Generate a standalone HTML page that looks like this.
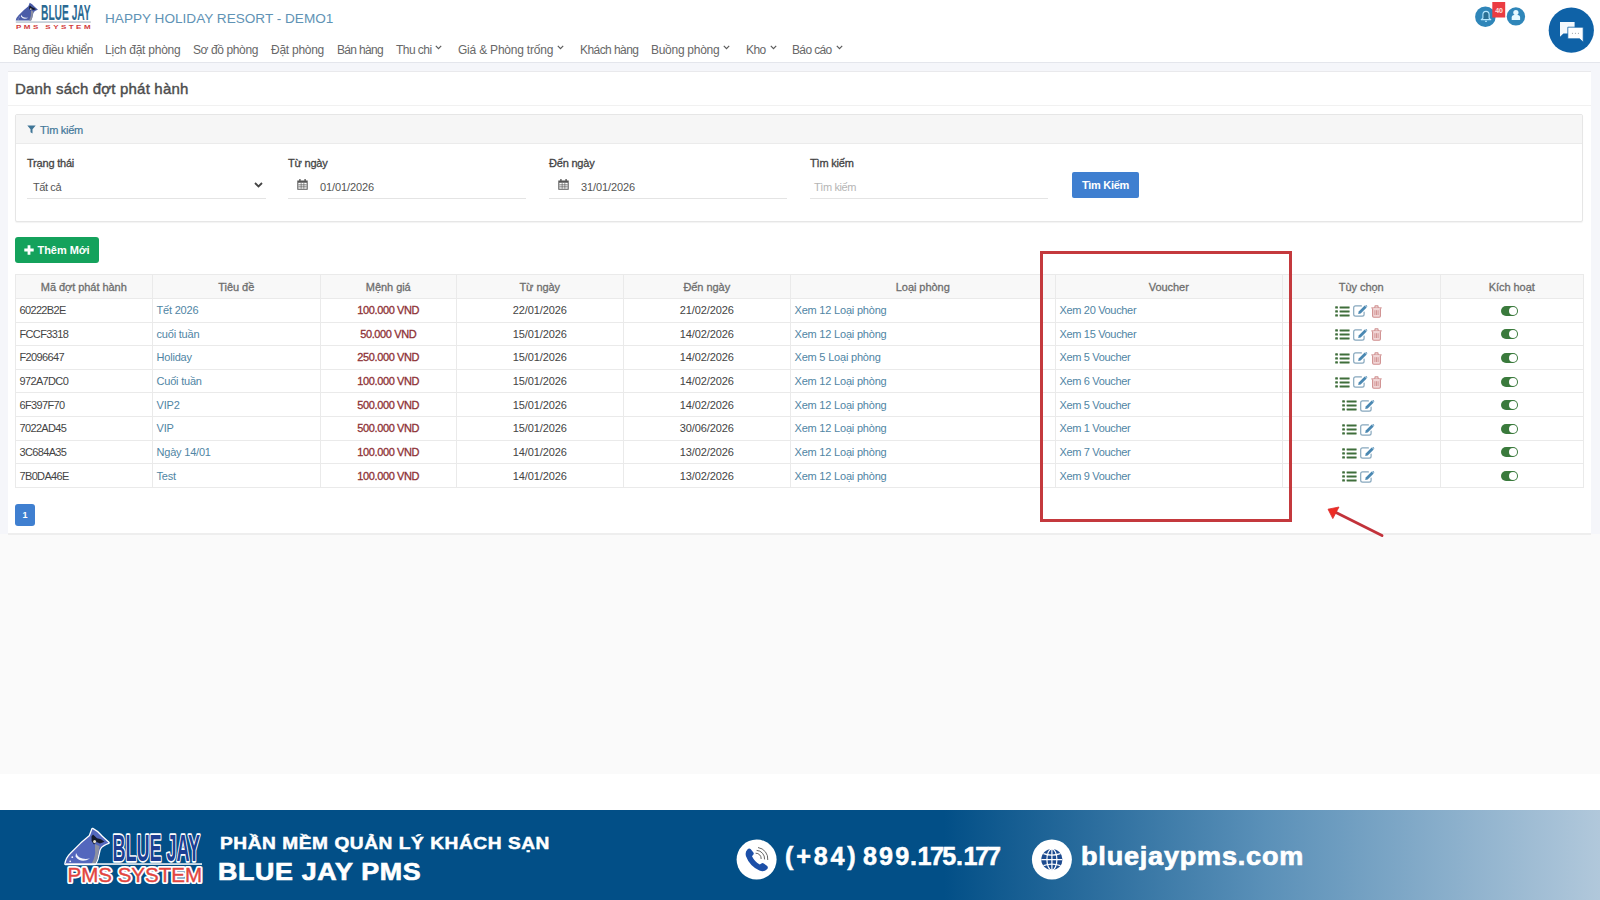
<!DOCTYPE html>
<html lang="vi">
<head>
<meta charset="utf-8">
<title>Danh sách đợt phát hành</title>
<style>
*{box-sizing:border-box;margin:0;padding:0}
html,body{width:1600px;height:900px;overflow:hidden;background:#fff}
body{font-family:"Liberation Sans",sans-serif;font-size:11px;color:#444;position:relative}
a{text-decoration:none;color:#5085a4}
.abs{position:absolute}
/* top bar */
#top{position:absolute;left:0;top:0;width:1600px;height:63px;background:#fff;border-bottom:1px solid #e4e6ec}
#resort{position:absolute;left:105px;top:10px;font-size:13.6px;line-height:18px;color:#5f93b5;white-space:nowrap}
#nav span{position:absolute;top:41.5px;font-size:12px;line-height:16px;color:#686868;white-space:nowrap;letter-spacing:-0.35px}
#nav svg{position:absolute;top:45px}
/* main area */
#main{position:absolute;left:0;top:63px;width:1600px;height:471px;background:#f5f6fa}
#below{position:absolute;left:0;top:534px;width:1600px;height:240px;background:#fafafa}
#card{position:absolute;left:8px;top:70.5px;width:1583px;height:464px;background:#fff;border-top:1px solid #e9e9ec;border-bottom:2px solid #eeeeee}
#title{position:absolute;left:15px;top:79px;font-size:15px;line-height:20px;font-weight:normal;-webkit-text-stroke:0.4px #4c4c4c;color:#4c4c4c;white-space:nowrap;letter-spacing:0.19px}
#titleline{position:absolute;left:8px;top:105px;width:1583px;height:1px;background:#f1f1f1}
/* search panel */
#panel{position:absolute;left:15px;top:114px;width:1568px;height:108px;border:1px solid #e6e6e6;border-radius:2px;background:#fff;box-shadow:0 1px 1px rgba(0,0,0,.05)}
#phead{position:absolute;left:0;top:0;width:1566px;height:29px;background:#f6f6f6;border-bottom:1px solid #ebebeb}
#phead span{position:absolute;left:24px;top:7.5px;font-size:11px;line-height:14px;color:#44789a;-webkit-text-stroke:0.2px #44789a;letter-spacing:-0.3px}
.lbl{position:absolute;top:155.5px;font-size:11px;line-height:14px;color:#444;font-weight:normal;-webkit-text-stroke:0.3px #444;white-space:nowrap;letter-spacing:-0.2px}
.val{position:absolute;top:180px;font-size:11px;line-height:14px;color:#555;white-space:nowrap;letter-spacing:-0.4px}
.uline{position:absolute;top:197.5px;height:1px;background:#e4e4e4}
#btnS{position:absolute;left:1072px;top:172px;width:67px;height:26px;background:#3f7fd0;border-radius:2px;color:#fff;font-size:11px;font-weight:bold;line-height:26px;text-align:center;letter-spacing:-0.3px}
#btnA{position:absolute;left:15px;top:237px;width:83.5px;height:26px;background:#14a25c;border-radius:3px;color:#fff;font-size:11px;font-weight:bold;line-height:26px;letter-spacing:-0.3px}
#btnA span{position:absolute;left:22.5px;top:0;letter-spacing:-0.05px}
/* table */
#tbl{position:absolute;left:15px;top:274.2px;width:1568px;border-collapse:collapse;table-layout:fixed;font-size:11px;letter-spacing:-0.4px}
#tbl th,#tbl td{border:1px solid #eaeaea;height:23.65px;padding:0 4px 0 3.5px;white-space:nowrap;overflow:hidden;line-height:14px;vertical-align:middle}
#tbl th{background:#f8f8f8;font-weight:normal;-webkit-text-stroke:0.3px #6e6e6e;color:#6e6e6e;text-align:center;height:23.7px;letter-spacing:-0.05px}
#tbl td.c{text-align:center}
#tbl td.m{text-align:center;color:#8e3236;font-weight:normal;-webkit-text-stroke:0.3px #8e3236;letter-spacing:-0.38px}
#tbl td{color:#444}
.ic{display:inline-block;vertical-align:middle;margin:0 1.5px;position:relative;left:-2.3px;top:0.2px}
.tg{display:inline-block;width:17px;height:10px;border-radius:5px;background:#3a7a3c;position:relative;vertical-align:middle;left:-2.3px;top:-0.7px}
.tg i{position:absolute;right:1px;top:1px;width:8px;height:8px;border-radius:50%;background:#fff}
#pg{position:absolute;left:15px;top:504px;width:20px;height:22px;background:#3f7fd0;border-radius:3px;color:#fff;font-size:9px;font-weight:bold;line-height:22px;text-align:center}
#redbox{position:absolute;left:1040px;top:251px;width:252px;height:271px;border:3px solid #c4393d}
/* footer */
#fwhite{position:absolute;left:0;top:774px;width:1600px;height:36px;background:#fff}
#foot{position:absolute;left:0;top:810px;width:1600px;height:90px;background:linear-gradient(90deg,#024f87 0,#024f87 59%,#5a90b8 79%,#b1c8db 100%)}
#foot .t1{position:absolute;left:219.8px;top:20.5px;font-size:17.4px;line-height:24px;font-weight:bold;color:#fff;white-space:nowrap;letter-spacing:0.5px;transform:scaleX(1.1);transform-origin:0 0;-webkit-text-stroke:0.5px #fff}
#foot .t2{position:absolute;left:218px;top:46px;font-size:24.4px;line-height:32px;font-weight:bold;color:#fff;white-space:nowrap;letter-spacing:0.6px;transform:scaleX(1.1);transform-origin:0 0;-webkit-text-stroke:0.7px #fff}
#foot .t3{position:absolute;left:785px;top:30px;width:230px;height:32px;font-size:25.2px;line-height:32px;font-weight:bold;color:#fff;white-space:nowrap;-webkit-text-stroke:0.5px #fff}
#foot .t3 span{position:absolute;top:0}
#foot .t4{position:absolute;left:1081px;top:30px;font-size:25.5px;line-height:32px;font-weight:bold;color:#fff;white-space:nowrap;letter-spacing:0.76px;transform:scaleX(1.06);transform-origin:0 0;-webkit-text-stroke:0.7px #fff}
#tbl a{letter-spacing:-0.2px}
#tbl td:nth-child(7) a{letter-spacing:-0.33px}
#tbl td.k{letter-spacing:-0.65px}
#tbl td.c{letter-spacing:-0.1px}
.num{letter-spacing:-0.1px}
</style>
</head>
<body>
<div id="top">

  <svg id="logo" class="abs" style="left:14px;top:1px" width="80" height="31" viewBox="0 0 80 31">
    <g transform="translate(1.6,19.8) scale(0.518,0.507) translate(-65.3,-864.7)"><path d="M65.5 864 Q66.5 858 70.7 854 L81.3 843.3 L89.9 836 L92.5 829 Q97.5 831.5 101.6 836.4 L108.5 842.8 Q105.5 844 103.7 845 Q100.5 846.5 99.5 849.7 L97.3 859.3 L95.2 864 Z" fill="#4a5ca8"/>
    <path d="M95 844 L99.6 846.3 L97.3 859.3 L95.2 864 L91.5 864 Q96 856 95 849 Z" fill="#8c90a0"/>
    <path d="M91.5 836.4 L93 834.5 L97 838.2 L101 839.3 L104.5 841.8 L100 843.4 L96.5 842 L94 844.6 L91.6 841 Z" fill="#141a2c"/>
    <ellipse cx="94.6" cy="841.6" rx="1.5" ry="1.7" fill="#e6e0cf"/>
    <path d="M76 853 Q79 860.5 90 858.5 Q81 863.8 75.5 856.4 Z" fill="#f2f5fc"/>
    <circle cx="72.3" cy="857.2" r="0.9" fill="#f2f5fc"/><circle cx="70.2" cy="861.3" r="0.9" fill="#f2f5fc"/></g>
    <text x="27" y="19.2" font-family="Liberation Sans, sans-serif" font-size="21.4" font-weight="bold" fill="#2b6a93" textLength="49.6" lengthAdjust="spacingAndGlyphs">BLUE JAY</text>
    <rect x="1.8" y="20.6" width="75" height="0.9" fill="#8fa3b3"/>
    <text x="1.25" y="28.1" transform="scale(1.6 1)" font-family="Liberation Sans, sans-serif" font-size="5" font-weight="bold" fill="#d23a3a" textLength="46.6" lengthAdjust="spacing">PMS SYSTEM</text>
  </svg>
  <svg class="abs" style="left:1470px;top:0" width="130" height="58" viewBox="1470 0 130 58">
    <circle cx="1485.4" cy="16.7" r="10.3" fill="#2f86b9"/>
    <path d="M1481.2 19.6 L1482.9 18.2 L1482.9 14.8 A3.1 3.4 0 0 1 1489.1 14.8 L1489.1 18.2 L1490.8 19.6 Z" fill="#2a6f94" stroke="#b4e6ff" stroke-width="1.1" stroke-linejoin="round"/>
    <path d="M1484.8 20.8 A1.2 1.2 0 0 0 1487.2 20.8 Z" fill="#b4e6ff"/>
    <rect x="1492.3" y="2" width="12.9" height="15.5" fill="#eb3c42"/>
    <text x="1498.9" y="13.2" font-family="Liberation Sans, sans-serif" font-size="7" font-weight="bold" fill="#ffe3e3" text-anchor="middle" letter-spacing="-0.2">40</text>
    <circle cx="1515.9" cy="16.4" r="9.2" fill="#2f86b9"/>
    <circle cx="1515.9" cy="12.5" r="2.6" fill="#e6faff"/>
    <path d="M1511.7 20.1 L1511.7 17.6 Q1511.7 15 1514.2 15 L1517.6 15 Q1520.1 15 1520.1 17.6 L1520.1 20.1 Z" fill="#e6faff"/>
    <circle cx="1571.3" cy="30.2" r="22.6" fill="#0f62a7"/>
    <path d="M1560 22 H1574.6 V33.4 H1563.4 L1560 36.8 Z" fill="#f4f8fc"/>
    <path d="M1567.8 27.2 H1583.2 V42.2 L1579.6 38.8 H1567.8 Z" fill="#fff" stroke="#0f62a7" stroke-width="0.8"/>
    <circle cx="1572.4" cy="33.2" r="0.55" fill="#8a8f96"/><circle cx="1575.4" cy="33.2" r="0.55" fill="#8a8f96"/><circle cx="1578.4" cy="33.2" r="0.55" fill="#8a8f96"/>
  </svg>
  <div id="resort">HAPPY HOLIDAY RESORT - DEMO1</div>
  <div id="nav">
    <span style="left:13px;letter-spacing:-0.4px">Bảng điều khiển</span>
    <span style="left:105px;letter-spacing:-0.23px">Lịch đặt phòng</span>
    <span style="left:193px;letter-spacing:-0.39px">Sơ đồ phòng</span>
    <span style="left:271px;letter-spacing:-0.26px">Đặt phòng</span>
    <span style="left:337px;letter-spacing:-0.68px">Bán hàng</span>
    <span style="left:396px;letter-spacing:-0.55px">Thu chi</span>
    <span style="left:458px;letter-spacing:-0.21px">Giá &amp; Phòng trống</span>
    <span style="left:580px;letter-spacing:-0.57px">Khách hàng</span>
    <span style="left:651px;letter-spacing:-0.28px">Buồng phòng</span>
    <span style="left:746px;letter-spacing:-0.58px">Kho</span>
    <span style="left:792px;letter-spacing:-0.64px">Báo cáo</span>
    <svg style="left:435px" width="7" height="5" viewBox="0 0 7 5"><path d="M0.8 0.9 L3.5 3.6 L6.2 0.9" fill="none" stroke="#5a5a5a" stroke-width="1.2"/></svg><svg style="left:557px" width="7" height="5" viewBox="0 0 7 5"><path d="M0.8 0.9 L3.5 3.6 L6.2 0.9" fill="none" stroke="#5a5a5a" stroke-width="1.2"/></svg><svg style="left:723px" width="7" height="5" viewBox="0 0 7 5"><path d="M0.8 0.9 L3.5 3.6 L6.2 0.9" fill="none" stroke="#5a5a5a" stroke-width="1.2"/></svg><svg style="left:770px" width="7" height="5" viewBox="0 0 7 5"><path d="M0.8 0.9 L3.5 3.6 L6.2 0.9" fill="none" stroke="#5a5a5a" stroke-width="1.2"/></svg><svg style="left:836px" width="7" height="5" viewBox="0 0 7 5"><path d="M0.8 0.9 L3.5 3.6 L6.2 0.9" fill="none" stroke="#5a5a5a" stroke-width="1.2"/></svg>
  </div>
</div>
<div id="main"></div>
<div id="below"></div>
<div id="card"></div>
<div id="title">Danh sách đợt phát hành</div>
<div id="titleline"></div>
<div id="panel"><div id="phead"><span>Tìm kiếm</span></div></div>
<div class="lbl" style="left:27px">Trạng thái</div>
<div class="lbl" style="left:288px">Từ ngày</div>
<div class="lbl" style="left:549px">Đến ngày</div>
<div class="lbl" style="left:810px">Tìm kiếm</div>
<div class="val" style="left:33px">Tất cả</div>
<div class="val num" style="left:320px">01/01/2026</div>
<div class="val num" style="left:581px">31/01/2026</div>
<div class="val" style="left:814px;color:#b5b5b5">Tìm kiếm</div>
<div class="uline" style="left:27px;width:239px"></div>
<div class="uline" style="left:288px;width:238px"></div>
<div class="uline" style="left:549px;width:238px"></div>
<div class="uline" style="left:810px;width:238px"></div>

<svg class="abs" style="left:27px;top:125px" width="9" height="9" viewBox="0 0 9 9"><path d="M0.3 0.4 H8.7 L5.5 4.2 V8.6 L3.5 7.2 V4.2 Z" fill="#3f7596"/></svg>
<svg class="abs" style="left:254px;top:182px" width="9" height="6" viewBox="0 0 9 6"><path d="M1 1 L4.5 4.4 L8 1" fill="none" stroke="#444" stroke-width="1.8"/></svg>
<svg class="abs cal" style="left:297px;top:179px" width="11" height="11" viewBox="0 0 11 11"><g fill="#555"><rect x="2.2" y="0" width="1.4" height="2.6" rx=".5"/><rect x="7.4" y="0" width="1.4" height="2.6" rx=".5"/><path d="M0.3 1.4 H10.7 V10.7 H0.3 Z M1.3 3.8 V9.7 H9.7 V3.8 Z" fill-rule="evenodd"/><path d="M1.3 5.6 H9.7 V6.2 H1.3 Z M1.3 7.6 H9.7 V8.2 H1.3 Z M3.8 3.8 H4.4 V9.7 H3.8 Z M6.6 3.8 H7.2 V9.7 H6.6 Z"/></g></svg>
<svg class="abs cal" style="left:558px;top:179px" width="11" height="11" viewBox="0 0 11 11"><g fill="#555"><rect x="2.2" y="0" width="1.4" height="2.6" rx=".5"/><rect x="7.4" y="0" width="1.4" height="2.6" rx=".5"/><path d="M0.3 1.4 H10.7 V10.7 H0.3 Z M1.3 3.8 V9.7 H9.7 V3.8 Z" fill-rule="evenodd"/><path d="M1.3 5.6 H9.7 V6.2 H1.3 Z M1.3 7.6 H9.7 V8.2 H1.3 Z M3.8 3.8 H4.4 V9.7 H3.8 Z M6.6 3.8 H7.2 V9.7 H6.6 Z"/></g></svg>
<div id="btnS">Tìm Kiếm</div>
<div id="btnA"><svg class="abs" style="left:9px;top:8px" width="10" height="10" viewBox="0 0 10 10"><path d="M3.6 0.3 H6.4 V3.6 H9.7 V6.4 H6.4 V9.7 H3.6 V6.4 H0.3 V3.6 H3.6 Z" fill="#fff"/></svg><span>Thêm Mới</span></div>
<table id="tbl">
<colgroup><col style="width:137px"><col style="width:168px"><col style="width:136px"><col style="width:167px"><col style="width:167px"><col style="width:265px"><col style="width:227px"><col style="width:158px"><col style="width:143px"></colgroup>
<thead><tr><th>Mã đợt phát hành</th><th>Tiêu đề</th><th>Mệnh giá</th><th>Từ ngày</th><th>Đến ngày</th><th>Loại phòng</th><th>Voucher</th><th>Tùy chọn</th><th>Kích hoạt</th></tr></thead>
<tbody>
<tr><td class="k">60222B2E</td><td><a>Tết 2026</a></td><td class="m">100.000 VND</td><td class="c">22/01/2026</td><td class="c">21/02/2026</td><td><a>Xem 12 Loại phòng</a></td><td><a>Xem 20 Voucher</a></td><td class="c o3"><svg class="ic" width="15" height="11" viewBox="0 0 15 11"><g fill="#3f6e3b"><rect x="0.2" y="0.3" width="2.7" height="2.3" rx=".4"/><rect x="4.6" y="0.5" width="10" height="1.9" rx=".3"/><rect x="0.2" y="4.3" width="2.7" height="2.3" rx=".4"/><rect x="4.6" y="4.5" width="10" height="1.9" rx=".3"/><rect x="0.2" y="8.3" width="2.7" height="2.3" rx=".4"/><rect x="4.6" y="8.5" width="10" height="1.9" rx=".3"/></g></svg><svg class="ic" width="15" height="12" viewBox="0 0 15 12"><path d="M8.4 0.9 H2.6 Q0.7 0.9 0.7 2.8 V9.3 Q0.7 11.2 2.6 11.2 H9.2 Q11.1 11.2 11.1 9.3 V7.2" fill="none" stroke="#86a7bd" stroke-width="1.2" stroke-linecap="round"/><path d="M5.2 8.9 L5.7 6.5 L11.7 0.5 L13.7 2.5 L7.7 8.5 Z" fill="#4a88b2"/><path d="M12.3 0.3 L13 -0.2 L14.4 1.2 L13.9 1.9 Z" fill="#4a88b2"/></svg><svg class="ic" width="11" height="13" viewBox="0 0 11 13"><g fill="none" stroke="#cf8f8f" stroke-width="1.1"><path d="M0.3 2.9 H10.7"/><path d="M3.6 2.8 L4.2 0.9 H6.8 L7.4 2.8"/><path d="M1.6 3.2 V11 Q1.6 12.2 2.8 12.2 H8.2 Q9.4 12.2 9.4 11 V3.2" fill="#f1d6d6"/><path d="M3.9 5.2 V10 M5.5 5.2 V10 M7.1 5.2 V10" stroke-width="0.9"/></g></svg></td><td class="c"><span class="tg"><i></i></span></td></tr>
<tr><td class="k">FCCF3318</td><td><a>cuối tuần</a></td><td class="m">50.000 VND</td><td class="c">15/01/2026</td><td class="c">14/02/2026</td><td><a>Xem 12 Loại phòng</a></td><td><a>Xem 15 Voucher</a></td><td class="c o3"><svg class="ic" width="15" height="11" viewBox="0 0 15 11"><g fill="#3f6e3b"><rect x="0.2" y="0.3" width="2.7" height="2.3" rx=".4"/><rect x="4.6" y="0.5" width="10" height="1.9" rx=".3"/><rect x="0.2" y="4.3" width="2.7" height="2.3" rx=".4"/><rect x="4.6" y="4.5" width="10" height="1.9" rx=".3"/><rect x="0.2" y="8.3" width="2.7" height="2.3" rx=".4"/><rect x="4.6" y="8.5" width="10" height="1.9" rx=".3"/></g></svg><svg class="ic" width="15" height="12" viewBox="0 0 15 12"><path d="M8.4 0.9 H2.6 Q0.7 0.9 0.7 2.8 V9.3 Q0.7 11.2 2.6 11.2 H9.2 Q11.1 11.2 11.1 9.3 V7.2" fill="none" stroke="#86a7bd" stroke-width="1.2" stroke-linecap="round"/><path d="M5.2 8.9 L5.7 6.5 L11.7 0.5 L13.7 2.5 L7.7 8.5 Z" fill="#4a88b2"/><path d="M12.3 0.3 L13 -0.2 L14.4 1.2 L13.9 1.9 Z" fill="#4a88b2"/></svg><svg class="ic" width="11" height="13" viewBox="0 0 11 13"><g fill="none" stroke="#cf8f8f" stroke-width="1.1"><path d="M0.3 2.9 H10.7"/><path d="M3.6 2.8 L4.2 0.9 H6.8 L7.4 2.8"/><path d="M1.6 3.2 V11 Q1.6 12.2 2.8 12.2 H8.2 Q9.4 12.2 9.4 11 V3.2" fill="#f1d6d6"/><path d="M3.9 5.2 V10 M5.5 5.2 V10 M7.1 5.2 V10" stroke-width="0.9"/></g></svg></td><td class="c"><span class="tg"><i></i></span></td></tr>
<tr><td class="k">F2096647</td><td><a>Holiday</a></td><td class="m">250.000 VND</td><td class="c">15/01/2026</td><td class="c">14/02/2026</td><td><a>Xem 5 Loại phòng</a></td><td><a>Xem 5 Voucher</a></td><td class="c o3"><svg class="ic" width="15" height="11" viewBox="0 0 15 11"><g fill="#3f6e3b"><rect x="0.2" y="0.3" width="2.7" height="2.3" rx=".4"/><rect x="4.6" y="0.5" width="10" height="1.9" rx=".3"/><rect x="0.2" y="4.3" width="2.7" height="2.3" rx=".4"/><rect x="4.6" y="4.5" width="10" height="1.9" rx=".3"/><rect x="0.2" y="8.3" width="2.7" height="2.3" rx=".4"/><rect x="4.6" y="8.5" width="10" height="1.9" rx=".3"/></g></svg><svg class="ic" width="15" height="12" viewBox="0 0 15 12"><path d="M8.4 0.9 H2.6 Q0.7 0.9 0.7 2.8 V9.3 Q0.7 11.2 2.6 11.2 H9.2 Q11.1 11.2 11.1 9.3 V7.2" fill="none" stroke="#86a7bd" stroke-width="1.2" stroke-linecap="round"/><path d="M5.2 8.9 L5.7 6.5 L11.7 0.5 L13.7 2.5 L7.7 8.5 Z" fill="#4a88b2"/><path d="M12.3 0.3 L13 -0.2 L14.4 1.2 L13.9 1.9 Z" fill="#4a88b2"/></svg><svg class="ic" width="11" height="13" viewBox="0 0 11 13"><g fill="none" stroke="#cf8f8f" stroke-width="1.1"><path d="M0.3 2.9 H10.7"/><path d="M3.6 2.8 L4.2 0.9 H6.8 L7.4 2.8"/><path d="M1.6 3.2 V11 Q1.6 12.2 2.8 12.2 H8.2 Q9.4 12.2 9.4 11 V3.2" fill="#f1d6d6"/><path d="M3.9 5.2 V10 M5.5 5.2 V10 M7.1 5.2 V10" stroke-width="0.9"/></g></svg></td><td class="c"><span class="tg"><i></i></span></td></tr>
<tr><td class="k">972A7DC0</td><td><a>Cuối tuần</a></td><td class="m">100.000 VND</td><td class="c">15/01/2026</td><td class="c">14/02/2026</td><td><a>Xem 12 Loại phòng</a></td><td><a>Xem 6 Voucher</a></td><td class="c o3"><svg class="ic" width="15" height="11" viewBox="0 0 15 11"><g fill="#3f6e3b"><rect x="0.2" y="0.3" width="2.7" height="2.3" rx=".4"/><rect x="4.6" y="0.5" width="10" height="1.9" rx=".3"/><rect x="0.2" y="4.3" width="2.7" height="2.3" rx=".4"/><rect x="4.6" y="4.5" width="10" height="1.9" rx=".3"/><rect x="0.2" y="8.3" width="2.7" height="2.3" rx=".4"/><rect x="4.6" y="8.5" width="10" height="1.9" rx=".3"/></g></svg><svg class="ic" width="15" height="12" viewBox="0 0 15 12"><path d="M8.4 0.9 H2.6 Q0.7 0.9 0.7 2.8 V9.3 Q0.7 11.2 2.6 11.2 H9.2 Q11.1 11.2 11.1 9.3 V7.2" fill="none" stroke="#86a7bd" stroke-width="1.2" stroke-linecap="round"/><path d="M5.2 8.9 L5.7 6.5 L11.7 0.5 L13.7 2.5 L7.7 8.5 Z" fill="#4a88b2"/><path d="M12.3 0.3 L13 -0.2 L14.4 1.2 L13.9 1.9 Z" fill="#4a88b2"/></svg><svg class="ic" width="11" height="13" viewBox="0 0 11 13"><g fill="none" stroke="#cf8f8f" stroke-width="1.1"><path d="M0.3 2.9 H10.7"/><path d="M3.6 2.8 L4.2 0.9 H6.8 L7.4 2.8"/><path d="M1.6 3.2 V11 Q1.6 12.2 2.8 12.2 H8.2 Q9.4 12.2 9.4 11 V3.2" fill="#f1d6d6"/><path d="M3.9 5.2 V10 M5.5 5.2 V10 M7.1 5.2 V10" stroke-width="0.9"/></g></svg></td><td class="c"><span class="tg"><i></i></span></td></tr>
<tr><td class="k">6F397F70</td><td><a>VIP2</a></td><td class="m">500.000 VND</td><td class="c">15/01/2026</td><td class="c">14/02/2026</td><td><a>Xem 12 Loại phòng</a></td><td><a>Xem 5 Voucher</a></td><td class="c o2"><svg class="ic" width="15" height="11" viewBox="0 0 15 11"><g fill="#3f6e3b"><rect x="0.2" y="0.3" width="2.7" height="2.3" rx=".4"/><rect x="4.6" y="0.5" width="10" height="1.9" rx=".3"/><rect x="0.2" y="4.3" width="2.7" height="2.3" rx=".4"/><rect x="4.6" y="4.5" width="10" height="1.9" rx=".3"/><rect x="0.2" y="8.3" width="2.7" height="2.3" rx=".4"/><rect x="4.6" y="8.5" width="10" height="1.9" rx=".3"/></g></svg><svg class="ic" width="15" height="12" viewBox="0 0 15 12"><path d="M8.4 0.9 H2.6 Q0.7 0.9 0.7 2.8 V9.3 Q0.7 11.2 2.6 11.2 H9.2 Q11.1 11.2 11.1 9.3 V7.2" fill="none" stroke="#86a7bd" stroke-width="1.2" stroke-linecap="round"/><path d="M5.2 8.9 L5.7 6.5 L11.7 0.5 L13.7 2.5 L7.7 8.5 Z" fill="#4a88b2"/><path d="M12.3 0.3 L13 -0.2 L14.4 1.2 L13.9 1.9 Z" fill="#4a88b2"/></svg></td><td class="c"><span class="tg"><i></i></span></td></tr>
<tr><td class="k">7022AD45</td><td><a>VIP</a></td><td class="m">500.000 VND</td><td class="c">15/01/2026</td><td class="c">30/06/2026</td><td><a>Xem 12 Loại phòng</a></td><td><a>Xem 1 Voucher</a></td><td class="c o2"><svg class="ic" width="15" height="11" viewBox="0 0 15 11"><g fill="#3f6e3b"><rect x="0.2" y="0.3" width="2.7" height="2.3" rx=".4"/><rect x="4.6" y="0.5" width="10" height="1.9" rx=".3"/><rect x="0.2" y="4.3" width="2.7" height="2.3" rx=".4"/><rect x="4.6" y="4.5" width="10" height="1.9" rx=".3"/><rect x="0.2" y="8.3" width="2.7" height="2.3" rx=".4"/><rect x="4.6" y="8.5" width="10" height="1.9" rx=".3"/></g></svg><svg class="ic" width="15" height="12" viewBox="0 0 15 12"><path d="M8.4 0.9 H2.6 Q0.7 0.9 0.7 2.8 V9.3 Q0.7 11.2 2.6 11.2 H9.2 Q11.1 11.2 11.1 9.3 V7.2" fill="none" stroke="#86a7bd" stroke-width="1.2" stroke-linecap="round"/><path d="M5.2 8.9 L5.7 6.5 L11.7 0.5 L13.7 2.5 L7.7 8.5 Z" fill="#4a88b2"/><path d="M12.3 0.3 L13 -0.2 L14.4 1.2 L13.9 1.9 Z" fill="#4a88b2"/></svg></td><td class="c"><span class="tg"><i></i></span></td></tr>
<tr><td class="k">3C684A35</td><td><a>Ngày 14/01</a></td><td class="m">100.000 VND</td><td class="c">14/01/2026</td><td class="c">13/02/2026</td><td><a>Xem 12 Loại phòng</a></td><td><a>Xem 7 Voucher</a></td><td class="c o2"><svg class="ic" width="15" height="11" viewBox="0 0 15 11"><g fill="#3f6e3b"><rect x="0.2" y="0.3" width="2.7" height="2.3" rx=".4"/><rect x="4.6" y="0.5" width="10" height="1.9" rx=".3"/><rect x="0.2" y="4.3" width="2.7" height="2.3" rx=".4"/><rect x="4.6" y="4.5" width="10" height="1.9" rx=".3"/><rect x="0.2" y="8.3" width="2.7" height="2.3" rx=".4"/><rect x="4.6" y="8.5" width="10" height="1.9" rx=".3"/></g></svg><svg class="ic" width="15" height="12" viewBox="0 0 15 12"><path d="M8.4 0.9 H2.6 Q0.7 0.9 0.7 2.8 V9.3 Q0.7 11.2 2.6 11.2 H9.2 Q11.1 11.2 11.1 9.3 V7.2" fill="none" stroke="#86a7bd" stroke-width="1.2" stroke-linecap="round"/><path d="M5.2 8.9 L5.7 6.5 L11.7 0.5 L13.7 2.5 L7.7 8.5 Z" fill="#4a88b2"/><path d="M12.3 0.3 L13 -0.2 L14.4 1.2 L13.9 1.9 Z" fill="#4a88b2"/></svg></td><td class="c"><span class="tg"><i></i></span></td></tr>
<tr><td class="k">7B0DA46E</td><td><a>Test</a></td><td class="m">100.000 VND</td><td class="c">14/01/2026</td><td class="c">13/02/2026</td><td><a>Xem 12 Loại phòng</a></td><td><a>Xem 9 Voucher</a></td><td class="c o2"><svg class="ic" width="15" height="11" viewBox="0 0 15 11"><g fill="#3f6e3b"><rect x="0.2" y="0.3" width="2.7" height="2.3" rx=".4"/><rect x="4.6" y="0.5" width="10" height="1.9" rx=".3"/><rect x="0.2" y="4.3" width="2.7" height="2.3" rx=".4"/><rect x="4.6" y="4.5" width="10" height="1.9" rx=".3"/><rect x="0.2" y="8.3" width="2.7" height="2.3" rx=".4"/><rect x="4.6" y="8.5" width="10" height="1.9" rx=".3"/></g></svg><svg class="ic" width="15" height="12" viewBox="0 0 15 12"><path d="M8.4 0.9 H2.6 Q0.7 0.9 0.7 2.8 V9.3 Q0.7 11.2 2.6 11.2 H9.2 Q11.1 11.2 11.1 9.3 V7.2" fill="none" stroke="#86a7bd" stroke-width="1.2" stroke-linecap="round"/><path d="M5.2 8.9 L5.7 6.5 L11.7 0.5 L13.7 2.5 L7.7 8.5 Z" fill="#4a88b2"/><path d="M12.3 0.3 L13 -0.2 L14.4 1.2 L13.9 1.9 Z" fill="#4a88b2"/></svg></td><td class="c"><span class="tg"><i></i></span></td></tr>
</tbody>
</table>
<div id="pg">1</div>
<div id="redbox"></div>
<svg class="abs" style="left:1320px;top:500px" width="70" height="42" viewBox="1320 500 70 42"><path d="M1382 535.6 L1336 512.6" stroke="#c2323a" stroke-width="2.8" fill="none" stroke-linecap="round"/><path d="M1328 509.2 L1339 507 L1332.8 518.6 Z" fill="#ee2c24" stroke="#d93030" stroke-width="0.8" stroke-linejoin="round"/></svg>
<div id="fwhite"></div>
<div id="foot">

  <svg class="abs" style="left:60px;top:14px" width="150" height="64" viewBox="60 824 150 64">
    <path d="M65.5 864 Q66.5 858 70.7 854 L81.3 843.3 L89.9 836 L92.5 829 Q97.5 831.5 101.6 836.4 L108.5 842.8 Q105.5 844 103.7 845 Q100.5 846.5 99.5 849.7 L97.3 859.3 L95.2 864 Z" fill="#fff" stroke="#fff" stroke-width="2.6" stroke-linejoin="round"/>
    <path d="M65.5 864 Q66.5 858 70.7 854 L81.3 843.3 L89.9 836 L92.5 829 Q97.5 831.5 101.6 836.4 L108.5 842.8 Q105.5 844 103.7 845 Q100.5 846.5 99.5 849.7 L97.3 859.3 L95.2 864 Z" fill="#5367bd"/>
    <path d="M95 844 L99.6 846.3 L97.3 859.3 L95.2 864 L91.5 864 Q96 856 95 849 Z" fill="#8c90a0"/>
    <path d="M91.5 836.4 L93 834.5 L97 838.2 L101 839.3 L104.5 841.8 L100 843.4 L96.5 842 L94 844.6 L91.6 841 Z" fill="#141a2c"/>
    <ellipse cx="94.6" cy="841.6" rx="1.5" ry="1.7" fill="#e6e0cf"/>
    <path d="M76 853 Q79 860.5 90 858.5 Q81 863.8 75.5 856.4 Z" fill="#f2f5fc"/>
    <circle cx="72.3" cy="857.2" r="0.9" fill="#f2f5fc"/><circle cx="70.2" cy="861.3" r="0.9" fill="#f2f5fc"/>
    <text x="112.5" y="861" font-family="Liberation Sans, sans-serif" font-size="37" font-weight="bold" fill="#fff" stroke="#fff" stroke-width="3.4" stroke-linejoin="round" textLength="87.5" lengthAdjust="spacingAndGlyphs">BLUE JAY</text>
    <text x="112.5" y="861" font-family="Liberation Sans, sans-serif" font-size="37" font-weight="bold" fill="#1c3f93" textLength="87.5" lengthAdjust="spacingAndGlyphs">BLUE JAY</text>
    <rect x="66" y="863.3" width="136" height="1.5" fill="#fff"/>
    <text x="67.5" y="882.4" font-family="Liberation Sans, sans-serif" font-size="20.5" fill="#fff" stroke="#fff" stroke-width="4" stroke-linejoin="round" textLength="134.5" lengthAdjust="spacingAndGlyphs">PMS SYSTEM</text>
    <text x="67.5" y="882.4" font-family="Liberation Sans, sans-serif" font-size="20.5" fill="#e2453f" stroke="#e2453f" stroke-width="0.4" stroke-linejoin="round" textLength="134.5" lengthAdjust="spacingAndGlyphs">PMS SYSTEM</text>
  </svg>
  <svg class="abs" style="left:735px;top:28px" width="44" height="44" viewBox="735 838 44 44">
    <circle cx="756.6" cy="859.6" r="20" fill="#fff"/>
    <path d="M747.4 849.6 Q749 847.6 750.6 849 L753.4 852.4 Q754.2 853.6 753.2 854.8 L752 856.2 Q754.6 861.6 759.8 864.6 L761.4 863.4 Q762.6 862.6 763.8 863.4 L767.2 866 Q768.6 867.4 767 869.2 Q764 872.6 759.4 870.6 Q749.4 865.6 746 856.2 Q744.8 852.2 747.4 849.6 Z" fill="#1c4fa8"/>
    <g fill="none" stroke="#666" stroke-width="1" stroke-linecap="round"><path d="M756 853.2 A5 5 0 0 1 761.2 858.6"/><path d="M757 850.4 A8 8 0 0 1 764.6 859"/><path d="M758.4 847.6 A11 11 0 0 1 767.8 859.6"/></g>
  </svg>
  <svg class="abs" style="left:1030px;top:28px" width="44" height="44" viewBox="1030 838 44 44">
    <circle cx="1051.9" cy="859.6" r="20" fill="#fff"/>
    <circle cx="1051.9" cy="859.6" r="10.6" fill="#1c4a8f"/>
    <g fill="none" stroke="#fff" stroke-width="1.2"><path d="M1041.3 859.6 H1062.5 M1051.9 849 V870.2"/><ellipse cx="1051.9" cy="859.6" rx="5" ry="10.6"/><path d="M1043.4 853.6 Q1051.9 856.6 1060.4 853.6 M1043.4 865.6 Q1051.9 862.6 1060.4 865.6"/></g>
  </svg>
  <div class="t1">PHẦN MỀM QUẢN LÝ KHÁCH SẠN</div>
  <div class="t2">BLUE JAY PMS</div>
  <div class="t3"><span style="left:0;letter-spacing:2.8px">(+84)</span> <span style="left:78px;letter-spacing:2.1px">899</span><span style="left:125px">.</span><span style="left:132.5px;letter-spacing:-1.6px">175</span><span style="left:171px">.</span><span style="left:178.5px;letter-spacing:-2.2px">177</span></div>
  <div class="t4">bluejaypms.com</div>
</div>
</body>
</html>
